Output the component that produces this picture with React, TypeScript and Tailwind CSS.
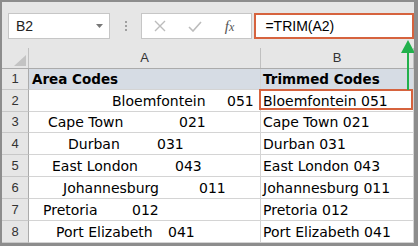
import { ReactNode } from "react";

const rows = [
  { word: "Bloemfontein", code: "051", pad: "pl-[83px]", w: "w-[115px]" },
  { word: "Cape Town", code: "021", pad: "pl-[19px]", w: "w-[131px]" },
  { word: "Durban", code: "031", pad: "pl-[39px]", w: "w-[89px]" },
  { word: "East London", code: "043", pad: "pl-[23px]", w: "w-[123px]" },
  { word: "Johannesburg", code: "011", pad: "pl-[34px]", w: "w-[136px]" },
  { word: "Pretoria", code: "012", pad: "pl-[14px]", w: "w-[89px]" },
  { word: "Port Elizabeth", code: "041", pad: "pl-[27px]", w: "w-[112px]" },
];

const heights = ["h-[22px]", "h-[21px]", "h-[22px]", "h-[22px]", "h-[22px]", "h-[22px]", "h-[22px]"];

const RowNum = ({ n }: { n: number }) => (
  <div className="w-[27px] flex items-center justify-center border-r border-b border-r-[#ababab] border-b-[#c8c8c8] bg-[#e6e6e6] text-[13px] text-[#333] font-['Liberation_Sans',sans-serif]">
    {n}
  </div>
);

const Cell = ({ children, className = "" }: { children?: ReactNode; className?: string }) => (
  <div className={`flex items-center border-r border-b border-[#d4d4d4] whitespace-nowrap leading-4 ${className}`}>
    {children}
  </div>
);

const App = () => {
  return (
    <div className="w-[418px] h-[246px] border-t-2 border-l-2 border-r-4 border-b-[3px] border-[#8d8d8d] bg-white font-['DejaVu_Sans',sans-serif] text-[14px] text-black overflow-hidden">
      <div className="relative w-full h-full flex flex-col">
        {/* formula bar */}
        <div className="h-[46px] bg-[#e6e6e6] flex items-start pt-[11px]">
          <div className="ml-[6px] w-[102px] h-[26px] bg-white border border-[#c6c6c6] flex items-center justify-between pl-[7px] pr-[6px] font-['Liberation_Sans',sans-serif] text-[14px] text-[#222]">
            <span>B2</span>
            <svg width="7" height="4" viewBox="0 0 7 4">
              <path d="M0 0h7L3.5 4z" fill="#777" />
            </svg>
          </div>
          <div className="ml-[15px] w-[2px] h-[26px] flex flex-col justify-center gap-[2px]">
            <div className="w-[2px] h-[2px] bg-[#a0a0a0]" />
            <div className="w-[2px] h-[2px] bg-[#a0a0a0]" />
            <div className="w-[2px] h-[2px] bg-[#a0a0a0]" />
          </div>
          <div className="ml-[14px] w-[112px] h-[26px] bg-white border border-[#c6c6c6] flex items-center">
            <svg className="ml-[12px]" width="12" height="12" viewBox="0 0 12 12">
              <path d="M1 1l10 10M11 1L1 11" stroke="#bcbcbc" strokeWidth="1.4" />
            </svg>
            <svg className="ml-[22px]" width="14" height="11" viewBox="0 0 14 11">
              <path d="M1 6l4 4 8-9" stroke="#bcbcbc" strokeWidth="1.6" fill="none" />
            </svg>
            <span className="ml-[23px] font-['Liberation_Serif',serif] italic text-[15px] text-[#555] leading-none">
              f<span className="text-[12px]">x</span>
            </span>
          </div>
          <div className="ml-[2px] w-[160px] h-[26px] bg-white border-2 border-[#d6633e] flex items-center pl-[9px] font-['Liberation_Sans',sans-serif] text-[14px] text-black">
            =TRIM(A2)
          </div>
        </div>

        {/* column headers */}
        <div className="h-[21px] flex bg-[#e6e6e6] border-b border-[#ababab] font-['Liberation_Sans',sans-serif] text-[13px] text-[#333]">
          <div className="w-[27px] border-r border-[#c0c0c0] flex items-end justify-end pr-[2px] pb-[2px]">
            <svg width="12" height="11" viewBox="0 0 12 11">
              <path d="M12 0V11H0z" fill="#c3c3c3" />
            </svg>
          </div>
          <div className="w-[232px] border-r border-[#c0c0c0] flex items-center justify-center">A</div>
          <div className="w-[153px] border-r border-[#c0c0c0] flex items-center justify-center">B</div>
        </div>

        {/* row 1 */}
        <div className="h-[21px] flex">
          <RowNum n={1} />
          <Cell className="w-[232px] bg-[#d6dce4] pl-[3px] font-bold text-[13.5px]">Area Codes</Cell>
          <Cell className="w-[153px] bg-[#d6dce4] pl-[2px] font-bold text-[13.5px]">Trimmed Codes</Cell>
        </div>

        {rows.map((r, i) => (
          <div key={r.word} className={`${heights[i]} flex`}>
            <RowNum n={i + 2} />
            <Cell className={`w-[232px] ${r.pad}`}>
              <span className={`inline-block ${r.w}`}>{r.word}</span>
              <span>{r.code}</span>
            </Cell>
            <Cell className="w-[153px] pl-[2px] relative">
              {`${r.word} ${r.code}`}
              {i === 0 && (
                <div className="absolute -left-[2px] -top-[1px] right-0 bottom-[1px] border-2 border-[#d6633e]" />
              )}
            </Cell>
          </div>
        ))}

        {/* green pointer */}
        <svg className="absolute left-[397px] top-[36px]" width="18" height="52" viewBox="0 0 18 52">
          <path d="M9 2L2 15H16z" fill="#22b14c" />
          <rect x="8" y="14" width="2" height="38" fill="#22b14c" />
        </svg>
      </div>
    </div>
  );
};

export default App;
